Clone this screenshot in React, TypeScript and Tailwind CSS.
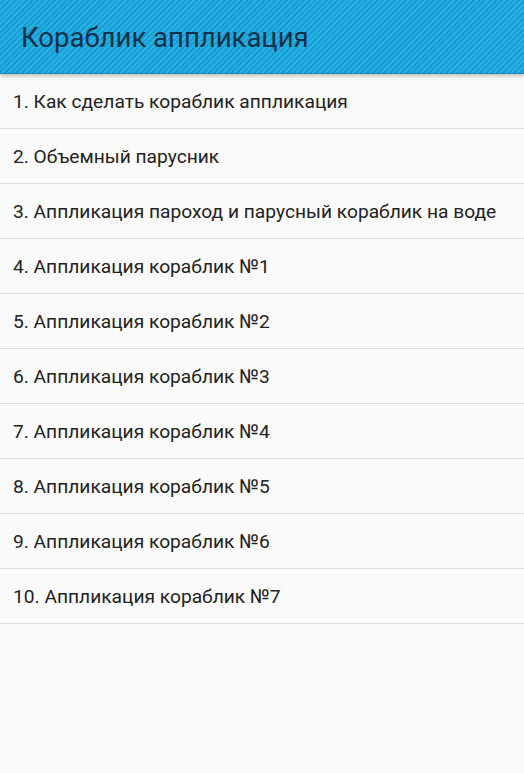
const items = [
  '1. Как сделать кораблик аппликация',
  '2. Объемный парусник',
  '3. Аппликация пароход и парусный кораблик на воде',
  '4. Аппликация кораблик №1',
  '5. Аппликация кораблик №2',
  '6. Аппликация кораблик №3',
  '7. Аппликация кораблик №4',
  '8. Аппликация кораблик №5',
  '9. Аппликация кораблик №6',
  '10. Аппликация кораблик №7',
];

export default function App() {
  return (
    <div className="min-h-[773px] w-full bg-[#fafafa] font-['Roboto',sans-serif]">
      <header className="relative z-10 h-[74px] flex items-center pl-[21px] border-b border-[#1985b5] bg-[repeating-linear-gradient(-45deg,#28b1e4_0px,#28b1e4_2px,#189dd0_2px,#189dd0_4px)] shadow-[0_2px_4px_rgba(0,0,0,0.25)]">
        <h1 className="text-[27.5px] leading-none text-[#10304c] pt-[2px]">Кораблик аппликация</h1>
      </header>
      <ul>
        {items.map((item) => (
          <li
            key={item}
            className="h-[55px] flex items-center pl-[13px] pt-[3px] border-b border-[#dcdcdc] text-[19.2px] text-[#222222] whitespace-nowrap"
          >
            {item}
          </li>
        ))}
      </ul>
    </div>
  );
}
